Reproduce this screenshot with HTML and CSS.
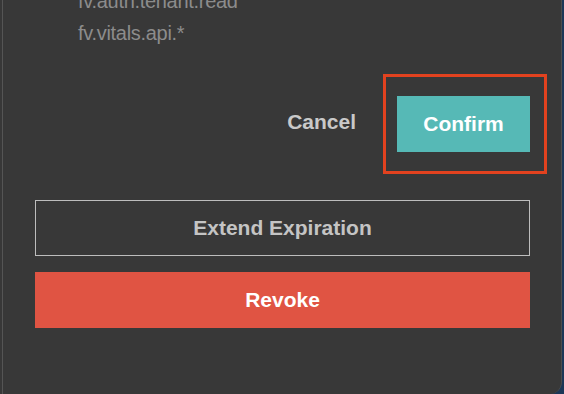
FILE: index.html
```html
<!DOCTYPE html>
<html lang="en">
  <head>
    <meta charset="UTF-8" />
    <title>Token details</title>
    <link rel="stylesheet" href="styles.css">
  </head>
  <body>
    <div class="window">
      <div class="dialog">
        <ul class="scope-list">
          <li>fv.auth.tenant.read</li>
          <li>fv.vitals.api.*</li>
        </ul>

        <div class="confirm-row">
          <button class="cancel-btn">Cancel</button>
          <div class="confirm-wrap">
            <button class="confirm-btn">Confirm</button>
            <!-- annotation box drawn over the button -->
            <span class="highlight"></span>
          </div>
        </div>

        <div class="token-actions">
          <button class="outline-btn">Extend Expiration</button>
          <button class="danger-btn">Revoke</button>
        </div>
      </div>
    </div>
  </body>
</html>
```

FILE: styles.css
```css
* {
  margin: 0;
  padding: 0;
  box-sizing: border-box;
  font-family: "Liberation Sans", Arial, sans-serif;
}

body {
  background-color: #1c3757;
  width: 564px;
  height: 394px;
  overflow: hidden;
}

/* Window frame */
.window {
  width: 562px;
  height: 394px;
  background-color: #383838;
  border-right: 1px solid #4c4c4c;
  border-bottom-right-radius: 12px;
  padding-left: 2px;
  overflow: hidden;
}

.dialog {
  display: flow-root;
  height: 100%;
  border-left: 1px solid #555555;
  padding: 0 31px 0 32px;
}

/* Scope list */
.scope-list {
  list-style: none;
  margin-top: -15px;
  padding-left: 43px;
}

.scope-list li {
  font-size: 20px;
  line-height: 32px;
  color: #8c8c8c;
  letter-spacing: -0.3px;
}

/* Confirm row */
.confirm-row {
  display: flex;
  justify-content: flex-end;
  align-items: center;
  gap: 41px;
  margin-top: 47px;
}

button {
  border: none;
  background: none;
  font-size: 21px;
  font-weight: bold;
  cursor: pointer;
}

.cancel-btn {
  color: #c9c9c9;
  margin-top: -5px;
}

.confirm-wrap {
  position: relative;
}

.confirm-btn {
  display: block;
  width: 133px;
  height: 56px;
  background-color: #56b9b6;
  color: white;
}

.highlight {
  position: absolute;
  top: -22px;
  left: -14px;
  right: -17px;
  bottom: -22px;
  border: 3px solid #e2421f;
  pointer-events: none;
}

/* Extend / revoke */
.token-actions {
  display: flex;
  flex-direction: column;
  gap: 16px;
  margin-top: 48px;
}

.outline-btn,
.danger-btn {
  height: 56px;
  width: 100%;
}

.outline-btn {
  border: 1px solid #bdbdbd;
  color: #c4c4c4;
}

.danger-btn {
  background-color: #e05443;
  color: white;
}
```
